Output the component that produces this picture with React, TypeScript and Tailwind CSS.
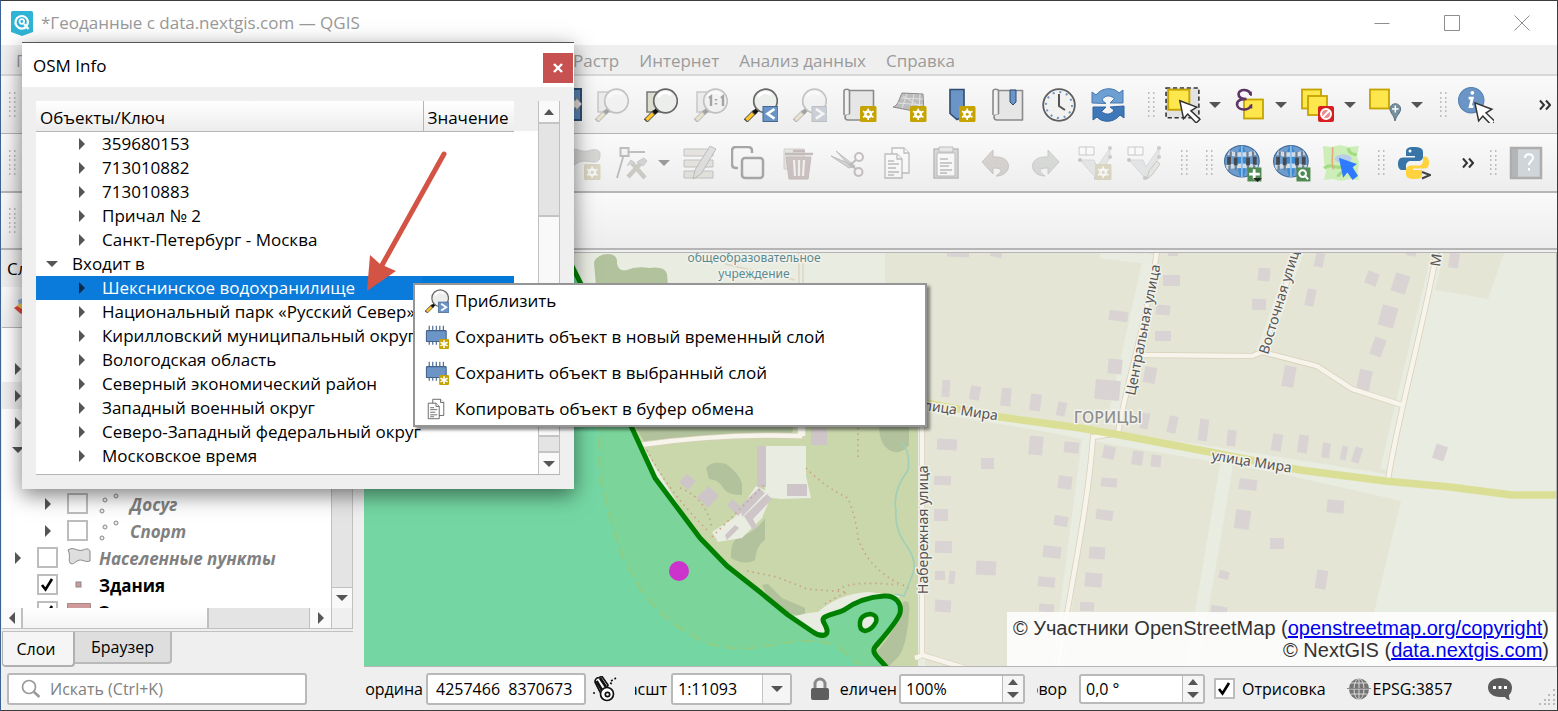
import React from 'react';
import type { ReactNode } from 'react';

const UI = "font-['Open_Sans','Noto_Sans',sans-serif]";

/* ---------- small shared pieces ---------- */

function Svg({ children, off, size = 34 }: { children: ReactNode; off?: boolean; size?: number }) {
  return (
    <svg
      width={size}
      height={size}
      viewBox="0 0 34 34"
      fill="none"
      aria-hidden="true"
      className={off ? 'opacity-35 saturate-[.35]' : ''}
    >
      {children}
    </svg>
  );
}

function Tri({ dir, color = '#555' }: { dir: 'up' | 'down' | 'left' | 'right'; color?: string }) {
  const d = { up: 'M1 9 6 3l5 6z', down: 'M0 3h12L6 9z', left: 'M9 0v12L3 6z', right: 'M3 0v12l6-6z' }[dir];
  return (
    <svg width="12" height="12" viewBox="0 0 12 12" aria-hidden="true">
      <path d={d} fill={color} />
    </svg>
  );
}

function Grip() {
  return (
    <svg width="8" height="26" viewBox="0 0 8 26" className="shrink-0" aria-hidden="true">
      {[1, 6].map((x) =>
        [1, 6, 10, 15, 19, 24].map((y) => <rect key={`${x}-${y}`} x={x} y={y - 1} width="1.500" height="2" fill="#bdbdbd" />),
      )}
    </svg>
  );
}

function Tool({ label, children, className = '' }: { label: string; children: ReactNode; className?: string }) {
  return (
    <button type="button" aria-label={label} className={`flex h-10 shrink-0 items-center justify-center ${className}`}>
      {children}
    </button>
  );
}

function Badge() {
  return (
    <g>
      <rect x="17" y="18" width="16.500" height="16" rx="1.500" fill="#c5a300" />
      <g stroke="#fff" strokeWidth="1.600">
        <path d="M25.200 20.500v11.500M20 23.200l10.500 6M30.500 23.200l-10.500 6" />
        <circle cx="25.200" cy="26.200" r="3.200" fill="#fff" />
      </g>
      <circle cx="25.200" cy="26.200" r="1.500" fill="#c5a300" />
    </g>
  );
}

function Lens({ children, page }: { children?: ReactNode; page?: boolean }) {
  return (
    <g>
      {page && <path d="M3 4h14v20H3z" fill="#dcdcd0" stroke="#777" strokeWidth="1.500" />}
      <path d="M1.500 33 11 23.500" stroke="#555" strokeWidth="5" />
      <path d="M2.500 32 9 25.500" stroke="#ffc629" strokeWidth="3.200" />
      <path d="M10 25 14.500 20.500" stroke="#111" strokeWidth="4" />
      <circle cx="21.500" cy="13" r="11.800" fill="#eceeec" stroke="#666" strokeWidth="1.700" />
      <path d="M14 9c3-5 9-6 13-2" stroke="#fff" strokeWidth="3" />
      {children}
    </g>
  );
}

function ArrowBox({ dir, x = 19 }: { dir: 'l' | 'r'; x?: number }) {
  return (
    <g>
      <rect x={x} y="18.500" width="15" height="15" fill="#6b95c7" stroke="#44678f" />
      <path d={dir === 'l' ? 'M30.500 21l-7 4.800 7 4.800' : 'M23 21l7 4.800-7 4.800'} stroke="#fff" strokeWidth="2.600" />
    </g>
  );
}

function Sheet() {
  return (
    <g fill="#e6e6e6" stroke="#8a8a8a" strokeWidth="1.600" strokeLinejoin="round">
      <path d="M6 2.500h24.500V32H5c-4 0-4-6 0-6h1z" />
      <path d="M1 27V3.500C1 .5 6.500.5 6.500 3.500V26" fill="#f2f2f2" />
    </g>
  );
}

function Pages() {
  return (
    <g stroke="#555" strokeWidth="1.300" fill="#fff">
      <path d="M12 2h12l5 5v20H12z" />
      <path d="M24 2v5h5" />
      <path d="M5 8h12l5 5v19H5z" />
      <path d="M17 8v5h5M8 15h6M8 18h11M8 22h8M8 26h11M8 29h6" />
    </g>
  );
}

function Cursor({ x, y }: { x: number; y: number }) {
  return (
    <path
      transform={`translate(${x} ${y})`}
      d="M0 0l3.500 17 4-4.500 8 8.500 3.500-3.500-8.500-8L16 6z"
      fill="#fff"
      stroke="#333"
      strokeWidth="1.400"
    />
  );
}

function Globe({ search }: { search?: boolean }) {
  return (
    <g>
      <ellipse cx="16" cy="15.500" rx="15.500" ry="14" fill="#6e9ccd" stroke="#40699a" />
      <ellipse cx="16" cy="15.500" rx="4" ry="14" fill="#3b8ad2" />
      <path d="M4 7.500c5 2.500 19 2.500 24 0M2 21c6-2 22-2 28 0" stroke="#cfdcea" strokeWidth="4" />
      <path d="M6 6.500v5M11 7v5M21 7v5M26 6.500v5M5 19v4M10.500 18.500v5M21.500 18.500v5M27 19v4" stroke="#6f7f90" strokeWidth="2" />
      <path d="M4.500 11.500v7M10.500 12v7M21.500 12v7M27.500 11.500v7" stroke="#454a50" strokeWidth="3.400" />
      <path d="M16 1.500v28" stroke="#8fbde6" strokeWidth="1.500" />
      <rect x="21" y="21" width="12.500" height="12.500" fill="#4f8a52" />
      {search ? (
        <g stroke="#fff" strokeWidth="1.800">
          <circle cx="26.500" cy="26.500" r="3" />
          <path d="M28.500 28.500l3 3" />
        </g>
      ) : (
        <g>
          <path d="M27 22.500v9M22.500 27H32" stroke="#fff" strokeWidth="2.500" />
          <path d="M26 30.500h8l-4 3.500z" fill="#222" />
        </g>
      )}
    </g>
  );
}

function Mesh({ children }: { children: ReactNode }) {
  return (
    <g>
      <path d="M2 14h14l3 7L32 2v9L20 32h-2z" fill="#c3ccd0" stroke="#9aa5a8" />
      <path d="M1 1h15v8H1zM8 1v8" stroke="#777" fill="#fff" />
      <g fill="#7a7ab0">
        <circle cx="32" cy="2" r="2" />
        <circle cx="32" cy="11" r="2" />
        <circle cx="18" cy="32" r="2" />
      </g>
      <circle cx="2" cy="14" r="2" fill="#c55" />
      {children}
    </g>
  );
}

const yellow = { fill: '#fde74c', stroke: '#c5a300', strokeWidth: 1.8 };

/* ---------- title, menu and tool bars ---------- */

function TitleBar() {
  return (
    <header className="flex h-11 shrink-0 items-center bg-white pl-[10px]">
      <svg width="22" height="25" viewBox="0 0 22 25" aria-hidden="true">
        <path d="M0 1.500Q0 0 1.500 0h19Q22 0 22 1.500V21l-11 4L0 21z" fill="#2fb4d6" />
        <path d="M15.500 15.500A6.300 6.300 0 1 1 17 10.500c0 1.500-.4 2.800-1.200 4" fill="none" stroke="#fff" strokeWidth="2.200" />
        <circle cx="10.800" cy="10.500" r="2.300" fill="none" stroke="#fff" strokeWidth="1.700" />
        <path d="M13 13l4.500 5" stroke="#fff" strokeWidth="2.400" />
      </svg>
      <h1 className="ml-2 whitespace-nowrap text-[17px] text-[#999]">*Геоданные с data.nextgis.com — QGIS</h1>
      <div className="ml-auto flex">
        {[
          ['Свернуть', 'M.5 8.500h15'],
          ['Развернуть', 'M.5 .5h15v15h-15z'],
          ['Закрыть', 'M.5.500l15 15M15.500.500l-15 15'],
        ].map(([label, d]) => (
          <button key={label} type="button" aria-label={label} className="flex h-11 w-[70px] items-center justify-center">
            <svg width="16" height="16" viewBox="0 0 16 16" fill="none" stroke="#8e8e8e" aria-hidden="true">
              <path d={d} />
            </svg>
          </button>
        ))}
      </div>
    </header>
  );
}

function MenuBar() {
  return (
    <nav className="flex h-[31px] shrink-0 items-center border-b-2 border-[#d8d8d8] bg-[#efefef] pt-[2px] pl-[5px] text-[17px] text-[#9b9b9b]">
      <button type="button" className="w-[557px] px-[10px] text-left">Проект</button>
      {['Растр', 'Интернет', 'Анализ данных', 'Справка'].map((m) => (
        <button key={m} type="button" className="whitespace-nowrap px-[10px]">
          {m}
        </button>
      ))}
    </nav>
  );
}

const BAR = 'flex shrink-0 items-center bg-linear-to-b from-[#fafafa] to-[#ededed] border-[#b5b5b5]';

function More({ className }: { className: string }) {
  return (
    <button type="button" aria-label="Ещё" className={`shrink-0 ${className}`}>
      <svg width="12" height="12" viewBox="0 0 12 12" fill="none" stroke="#333" strokeWidth="2" aria-hidden="true">
        <path d="M1 1.500 5 6l-4 4.500M7 1.500 11 6l-4 4.500" />
      </svg>
    </button>
  );
}

function NavigationBar() {
  return (
    <div className={`${BAR} h-[58px] border-b pl-[7px]`}>
      <Grip />
      <div className="flex w-[571px] shrink-0 justify-end pr-[3px]">
        <Svg>
          <path d="M14 1h17v31H14z" fill="#5b85b8" stroke="#2e4d73" strokeWidth="2" />
          <path d="M20 12h6v-3l6 7-6 7v-3h-6z" fill="#ddd" stroke="#777" />
        </Svg>
      </div>
      <div className="flex w-[546px] shrink-0">
        <Tool label="Увеличить до выделения" className="flex-1"><Svg off><Lens page /></Svg></Tool>
        <Tool label="Увеличить до слоя" className="flex-1"><Svg><Lens page /></Svg></Tool>
        <Tool label="Исходный масштаб" className="flex-1">
          <Svg off>
            <Lens page>
              <path d="M15 10l2-1.500V18M27 10l2-1.500V18M22 11v1.500M22 15v1.500" stroke="#111" strokeWidth="2.400" />
            </Lens>
          </Svg>
        </Tool>
        <Tool label="Предыдущий охват" className="flex-1"><Svg><Lens><ArrowBox dir="l" /></Lens></Svg></Tool>
        <Tool label="Следующий охват" className="flex-1"><Svg off><Lens><ArrowBox dir="r" /></Lens></Svg></Tool>
        <Tool label="Новый вид карты" className="flex-1"><Svg><Sheet /><Badge /></Svg></Tool>
        <Tool label="Новый 3D вид" className="flex-1">
          <Svg>
            <path d="M9 5l21 1 1 19L0 19c5-1 6-8 9-14z" fill="#bdbdbd" stroke="#8b8b8b" />
            <path d="M8 10l22 1M5 15l25 2M14 6l-5 14M21 6l-3 16M27 6l-1 17M10 8l18 11" stroke="#e2e2e2" />
            <Badge />
          </Svg>
        </Tool>
        <Tool label="Новая закладка" className="flex-1">
          <Svg>
            <path d="M8 1.500h14v27l-7 3-7-6z" fill="#6b95c7" stroke="#2e4d73" strokeWidth="1.600" />
            <Badge />
          </Svg>
        </Tool>
        <Tool label="Закладки" className="flex-1">
          <Svg>
            <Sheet />
            <path d="M18 2h6v12l-3 3-3-3z" fill="#6b95c7" stroke="#2e4d73" />
          </Svg>
        </Tool>
        <Tool label="Время" className="flex-1">
          <Svg>
            <circle cx="17" cy="17" r="15.800" fill="#f2f2f0" stroke="#5e5e5e" strokeWidth="1.800" />
            <circle cx="17" cy="17" r="13" stroke="#6b95c7" strokeWidth="2" strokeDasharray="2 4.800" />
            <path d="M17 6v12l6 4" stroke="#555" strokeWidth="2" />
          </Svg>
        </Tool>
        <Tool label="Обновить" className="flex-1">
          <Svg>
            <path d="M1 15V4l4 3C11-1 23-1 28 5l4-3v13H19l4.500-4.500C18 6 13 8 11 12l4 3.500z" fill="#6e9fd3" stroke="#4478b2" />
            <path d="M33 18v12l-4-3C23 35 11 35 6 29l-4 3V19h13l-4.500 4.500C16 28 21 26 23 22l-4-3z" fill="#3f78b8" stroke="#2f62a0" />
          </Svg>
        </Tool>
      </div>
      <div className="flex flex-1 items-center overflow-hidden pl-[14px]">
        <Grip />
        <Tool label="Выделить объекты" className="ml-[10px]">
          <Svg size={36}>
            <path d="M1 1h31v28H1z" fill="#e2e2e2" stroke="#333" strokeWidth="1.500" strokeDasharray="4 2.500" />
            <rect x="3" y="2.500" width="20" height="19" {...yellow} />
            <Cursor x={14} y={13} />
          </Svg>
        </Tool>
        <Tool label="Варианты выделения" className="ml-[8px] w-3"><Tri dir="down" /></Tool>
        <Tool label="Выделить по выражению" className="ml-[12px]">
          <Svg>
            <rect x="11" y="11.500" width="19" height="19" {...yellow} />
            <path
              d="M17.500 7C17 1 6 0 5.500 6c0 4 3.500 5 8 5C8 11 4 12.500 4 16.500 4.500 23 17 23 18 17"
              stroke="#5c3566"
              strokeWidth="2.600"
            />
            <path d="M18 3.500V8M18.500 16v4.500" stroke="#5c3566" strokeWidth="1.500" />
          </Svg>
        </Tool>
        <Tool label="Варианты выражения" className="ml-[8px] w-3"><Tri dir="down" /></Tool>
        <Tool label="Снять выделение" className="ml-[14px]">
          <Svg>
            <rect x="1" y="1.500" width="19" height="19" {...yellow} />
            <rect x="7" y="8" width="19" height="19" {...yellow} />
            <rect x="17" y="18" width="16" height="16" rx="2" fill="#d81e1e" />
            <circle cx="25" cy="26" r="5" stroke="#fff" strokeWidth="2" fill="#e88" />
            <path d="M21.500 29.500l7-7" stroke="#fff" strokeWidth="2" />
          </Svg>
        </Tool>
        <Tool label="Варианты снятия" className="ml-[9px] w-3"><Tri dir="down" /></Tool>
        <Tool label="Выделить по расположению" className="ml-[13px]">
          <Svg>
            <rect x="1" y="1.500" width="19" height="19" {...yellow} />
            <path d="M26 33c-1-6-5-8-5-12a5.300 5.300 0 0 1 10.600 0c0 4-4 6-5.600 12z" fill="#77909f" stroke="#587080" />
            <path d="M26.300 17.500v7M23 21h6.600" stroke="#fff" strokeWidth="1.500" />
          </Svg>
        </Tool>
        <Tool label="Варианты расположения" className="ml-[8px] w-3"><Tri dir="down" /></Tool>
        <div className="ml-[16px]"><Grip /></div>
        <Tool label="Определить объекты" className="ml-[11px]">
          <Svg size={36}>
            <circle cx="12.500" cy="12.500" r="12" fill="#6b95c7" stroke="#5580b2" />
            <path d="M13.500 5.500h.1" stroke="#fff" strokeWidth="3.500" strokeLinecap="round" />
            <path d="M10 10.500h3.500L11.500 18.500h3" stroke="#fff" strokeWidth="2.600" />
            <Cursor x={16} y={15} />
          </Svg>
        </Tool>
        <More className="mr-[6px] ml-auto" />
      </div>
    </div>
  );
}

function EditBar() {
  return (
    <div className={`${BAR} h-[59px] border-b-2 pl-[7px]`}>
      <Grip />
      <div className="flex w-[594px] shrink-0 justify-end pr-[9px]">
        <Svg off>
          <path d="M1 5c8-5 12 2 20 0 5-2 12-2 12 3 0 6-2 8-6 8-7 0-12-3-18 2-5 3-9-3-8-13z" fill="#9a9f8c" stroke="#777" />
          <Badge />
        </Svg>
      </div>
      <Tool label="Инструменты узлов" className="ml-[5px]">
        <Svg off>
          <path d="M2 32 9 8M13 6h17" stroke="#555" strokeWidth="1.800" />
          <rect x="5.500" y="2" width="8" height="8" stroke="#555" strokeWidth="2" fill="#eee" />
          <path d="M13 31l12-13M17 17l13 15" stroke="#8b8250" strokeWidth="4.500" />
          <path d="M22 16l7-4 3 3-4 5zM12 20l4-6 4 3" fill="#999" stroke="#777" />
        </Svg>
      </Tool>
      <Tool label="Варианты инструмента" className="ml-[9px] w-3"><Tri dir="down" color="#999" /></Tool>
      <div className="ml-[4px] flex w-[495px] shrink-0">
        <Tool label="Режим редактирования" className="flex-1">
          <Svg off>
            <path d="M2 3h29v7H2zM2 14h29v7H2zM2 25h29v7H2z" fill="#c8c29c" stroke="#666" />
            <path d="M11 33l2-9L28 0l6 3-15 25z" fill="#bbb5ad" stroke="#555" />
          </Svg>
        </Tool>
        <Tool label="Дублировать" className="flex-1">
          <Svg>
            <path d="M7 22H5q-4 0-4-4V5q0-4 4-4h12q4 0 4 4v2" stroke="#a6a6a6" strokeWidth="2.500" />
            <rect x="11" y="12" width="21" height="20" rx="3" stroke="#a6a6a6" strokeWidth="2.500" />
          </Svg>
        </Tool>
        <Tool label="Удалить" className="flex-1">
          <Svg off>
            <path d="M3 3h20v20H3z" fill="#cdc7a6" stroke="#888" />
            <path d="M5 11h25l-3 22H8z" fill="#b05a5a" stroke="#8c4a4a" />
            <path d="M13 14l1 16M18 14v16M23 14l-1 16" stroke="#f2e4e4" strokeWidth="2.200" />
            <path d="M4 8h28M12 5h12" stroke="#8c4a4a" strokeWidth="2.500" />
          </Svg>
        </Tool>
        <Tool label="Вырезать" className="flex-1">
          <Svg off>
            <path d="M1 10l24 10-6 2zM6 5l19 15-5 0z" fill="#999" stroke="#555" />
            <path d="M20 19l6-5M20 19l6 4" stroke="#555" strokeWidth="2" />
            <circle cx="29" cy="11" r="4" stroke="#8a5555" strokeWidth="2" />
            <circle cx="28.500" cy="26" r="4" stroke="#8a5555" strokeWidth="2" />
          </Svg>
        </Tool>
        <Tool label="Копировать" className="flex-1"><Svg off><Pages /></Svg></Tool>
        <Tool label="Вставить" className="flex-1">
          <Svg off>
            <path d="M5 3h24v29H5z" fill="#9aa39a" stroke="#555" strokeWidth="1.500" />
            <path d="M8 7h18v23H8z" fill="#fff" stroke="#555" />
            <path d="M10 1h14v5H10z" fill="#ccc" stroke="#555" />
            <path d="M11 13h8M11 17h12M11 20h9M11 24h12M11 27h7" stroke="#555" strokeWidth="1.300" />
          </Svg>
        </Tool>
        <Tool label="Отменить" className="flex-1">
          <Svg off>
            <path d="M3 16 14 4v7c12-1 17 5 15 12-2 5-7 7-12 7 6-4 8-8-3-8v6z" fill="#a88f7e" stroke="#806a5b" />
          </Svg>
        </Tool>
        <Tool label="Повторить" className="flex-1">
          <Svg off>
            <path d="M31 16 20 4v7C8 10 3 16 5 23c2 5 7 7 12 7-6-4-8-8 3-8v6z" fill="#9bab97" stroke="#71806e" />
          </Svg>
        </Tool>
        <Tool label="Создать сетку" className="flex-1"><Svg off><Mesh><Badge /></Mesh></Svg></Tool>
        <Tool label="Править сетку" className="flex-1">
          <Svg off><Mesh><path d="M20 33l2-8 8-10 3 3-8 11z" fill="#d8d0a0" stroke="#777" /></Mesh></Svg>
        </Tool>
      </div>
      <div className="flex flex-1 items-center overflow-hidden pl-[11px]">
        <Grip />
        <div className="ml-[17px]"><Grip /></div>
        <div className="ml-[5px] flex w-[147px] shrink-0">
          <Tool label="Добавить веб-слой" className="flex-1"><Svg size={38}><Globe /></Svg></Tool>
          <Tool label="Поиск веб-слоёв" className="flex-1"><Svg size={38}><Globe search /></Svg></Tool>
          <Tool label="OSM Info" className="flex-1">
            <Svg size={36}>
              <path d="M0 1l8 1 8-2 8 2 10-1-2 9 2 7-1 8 1 8-9-1-8 2-8-2-8 1 2-9-2-7z" fill="#cdeeb8" />
              <path d="M1 22c8-6 10 2 18-2M14 30c2-6 9-4 12-10M24 3c0 5 5 6 8 6" stroke="#a2dc82" strokeWidth="3" />
              <path d="M9 2c1 9-2 13 1 21" stroke="#e8a878" strokeWidth="1.500" />
              <ellipse cx="19" cy="13" rx="8" ry="4" fill="#b7cdea" />
              <path d="M15 12l17 6-4 3 5 8-5 4-5-7-4 5z" fill="#2f7bff" />
            </Svg>
          </Tool>
        </div>
        <div className="ml-[12px]"><Grip /></div>
        <Tool label="Консоль Python" className="ml-[12px]">
          <Svg>
            <path d="M17 1c-7 0-8 2-8 5v4h9v1.500H6C2 11.500 1 15 1 18c0 4 2 6 4 6h4v-4c0-3 2-5 5-5h8c2 0 4-2 4-4V6c0-4-4-5-9-5z" fill="#3775a9" />
            <path d="M17 33c7 0 8-2 8-5v-4h-9v-1.500h12c3 0 4-3 4-6 0-4-2-6-4-6h-2v4c0 3-2 5-4 5h-8c-3 0-5 2-5 4v5c0 3 3 4.500 8 4.500z" fill="#ffd340" />
            <circle cx="13" cy="5" r="1.500" fill="#fff" />
            <path d="M25 26l8 3-8 3.500" stroke="#444" strokeWidth="2" />
          </Svg>
        </Tool>
        <More className="ml-[31px]" />
        <div className="ml-[15px]"><Grip /></div>
        <Tool label="Справка" className="ml-[12px]">
          <Svg>
            <path d="M2 2h30v30H2z" fill="#cfd5d8" stroke="#adadad" strokeWidth="2.500" />
            <path d="M3 3h6v28H3z" fill="#b3b6b8" />
            <path d="M16 12c0-5 8-5 8 0 0 3-4 3-4 7M20 22v2.500" stroke="#fff" strokeWidth="2" />
          </Svg>
        </Tool>
      </div>
    </div>
  );
}

/* ---------- layers dock ---------- */

type Layer = {
  name?: string;
  open?: boolean;
  leaf?: boolean;
  child?: boolean;
  checked?: boolean;
  current?: boolean;
  symbol?: 'points' | 'area' | 'dot' | 'fill';
};

const layers: Layer[] = [
  { leaf: true },
  {},
  { current: true },
  {},
  { open: true },
  { child: true, leaf: true },
  { name: 'Досуг', child: true, symbol: 'points', checked: false },
  { name: 'Спорт', child: true, symbol: 'points', checked: false },
  { name: 'Населенные пункты', symbol: 'area', checked: false },
  { name: 'Здания', leaf: true, symbol: 'dot', checked: true },
  { name: 'Земли', leaf: true, symbol: 'fill', checked: true },
];

const symbols = {
  points: (
    <g fill="#eee" stroke="#888">
      <circle cx="4" cy="18" r="2" />
      <circle cx="7" cy="7" r="2" />
      <circle cx="18" cy="3" r="2" />
    </g>
  ),
  area: <path d="M1 3c6-4 9 2 15 0 4-2 7-1 7 2v9c-5 2-8-3-13 0-3 2-4 4-7 2-2-4 1-7-2-13z" fill="#dedede" stroke="#888" />,
  dot: <rect x="9" y="8" width="5" height="5" fill="#cf9a9a" stroke="#888" />,
  fill: <path d="M.5 2.500h23v20H.5z" fill="#cf9a9a" stroke="#a88" />,
};

function Check({ on, label, id }: { on?: boolean; label?: string; id?: string }) {
  return (
    <span className="relative flex size-[21px] shrink-0">
      <input
        id={id}
        type="checkbox"
        defaultChecked={on}
        aria-label={label}
        className="peer size-[21px] appearance-none border-2 border-[#bdbdbd] bg-white"
      />
      <svg viewBox="0 0 21 21" className="pointer-events-none absolute inset-0 hidden peer-checked:block" aria-hidden="true">
        <path d="M5 11l3.500 4.500L15 5" fill="none" stroke="#000" strokeWidth="2.600" />
      </svg>
    </span>
  );
}

function Dock() {
  return (
    <aside className="flex w-[352px] shrink-0 flex-col pl-px">
      <h2 className="flex h-[37px] shrink-0 items-center pl-[5px] text-[17px]">Слои</h2>
      <div className="flex h-[41px] shrink-0 items-center border-b border-[#b5b5b5] bg-linear-to-b from-[#fafafa] to-[#ededed] pl-3">
        <svg width="22" height="22" viewBox="0 0 22 22" aria-hidden="true">
          <path d="M4 4l8-3 2 8-9 2z" fill="#8fb0d8" />
          <path d="M3 9l6-2 3 6-7 2z" fill="#f0c850" />
          <path d="M0 12l3-2 8 5-4 3z" fill="#e2483c" />
        </svg>
      </div>
      <div className="flex min-h-0 flex-1">
        <ul className="min-w-0 flex-1 overflow-hidden bg-white">
          {layers.map((l, i) => (
            <li key={i} className={`flex h-[27px] items-center ${l.child ? 'pl-[40px]' : 'pl-[10px]'} ${l.current ? 'bg-[#efefef]' : ''}`}>
              {l.leaf ? (
                <span className="w-[25px] shrink-0" />
              ) : (
                <button type="button" aria-label="Развернуть" className="w-[25px] shrink-0">
                  <Tri dir={l.open ? 'down' : 'right'} />
                </button>
              )}
              {l.name && (
                <>
                  <Check on={l.checked} label={l.name} />
                  <svg width="24" height="22" viewBox="0 0 24 22" className={`shrink-0 ${l.child ? 'ml-[10px]' : 'ml-[9px]'}`} aria-hidden="true">
                    {l.symbol && symbols[l.symbol]}
                  </svg>
                  <span className={`ml-[8px] pt-[2px] whitespace-nowrap text-[17px] font-bold ${l.checked ? 'text-black' : 'text-[#808080] italic'}`}>
                    {l.name}
                  </span>
                </>
              )}
            </li>
          ))}
        </ul>
        <div className="flex w-[22px] shrink-0 flex-col justify-end border-x border-[#c0c0c0] bg-[#e4e4e4]">
          <button type="button" aria-label="Вниз" className="flex h-[21px] items-center justify-center border-t border-[#c0c0c0] bg-[#f8f8f8]">
            <Tri dir="down" />
          </button>
        </div>
      </div>
      <div className="flex h-[21px] shrink-0 border-b border-[#c0c0c0]">
        <button type="button" aria-label="Влево" className="flex w-[21px] items-center justify-center border-r-2 border-[#c0c0c0] bg-[#fafafa]">
          <Tri dir="left" />
        </button>
        <div className="w-[186px] border-r-2 border-[#c0c0c0] bg-linear-to-b from-white to-[#f3f3f3]" />
        <div className="flex-1 border-r border-[#c0c0c0] bg-[#e4e4e4]" />
        <button type="button" aria-label="Вправо" className="flex w-[21px] items-center justify-center bg-[#fafafa]">
          <Tri dir="right" />
        </button>
        <div className="w-[22px] border-x border-[#c0c0c0]" />
      </div>
      <div role="tablist" className="mt-[2px] flex h-[36px] shrink-0 items-start border-t border-[#c0c0c0] text-[16px]">
        <button role="tab" aria-selected="true" type="button" className="h-[35px] w-[73px] rounded-b-sm border-r-2 border-b-2 border-l border-[#b0b0b0] bg-[#f5f5f5] pr-1">
          Слои
        </button>
        <button role="tab" aria-selected="false" type="button" className="h-[32px] w-[97px] rounded-br-sm border-r-2 border-b-2 border-[#b9b9b9] bg-[#dedede]">
          Браузер
        </button>
      </div>
    </aside>
  );
}

/* ---------- map ---------- */

const shore =
  'M570 262 581 284C596 330 610 385 632 428L655 478 700 538 727 566 760 592 788 615 813 632C820 637 828 637 827 630 826 624 820 620 825 617 830 614 838 613 844 610 855 602 868 597 884 596 896 595 902 604 900 613 898 621 880 641 875 647 871 653 878 657 887 668';

/* x, y, width, height, rotation */
const houses: number[][] = [
  [947, 252, 22, 5, 2], [990, 252, 12, 5, 12], [1168, 252, 10, 4, 0], [1163, 275, 17, 11, 0], [1156, 305, 14, 10, 4], [1155, 331, 16, 10, 0],
  [1109, 311, 19, 10, 8], [1108, 359, 14, 15, 5], [1095, 380, 25, 20, 5], [1144, 367, 12, 16, 10], [942, 380, 8, 17, 4], [970, 386, 10, 14, 10],
  [1001, 388, 10, 18, 5], [1030, 394, 11, 17, 7], [1057, 402, 9, 14, 12], [1141, 413, 8, 16, 10], [1168, 416, 9, 17, 12], [1199, 419, 9, 22, 7],
  [1227, 430, 9, 16, 6], [937, 439, 20, 11, 3], [1029, 436, 14, 19, 5], [1064, 442, 15, 11, 5], [1103, 446, 12, 13, 12], [1132, 451, 11, 14, 8],
  [1151, 455, 10, 12, 5], [981, 458, 13, 11, 0], [934, 476, 17, 9, 2], [1058, 476, 14, 13, 7], [1101, 478, 16, 9, 4], [934, 509, 14, 12, 0],
  [1054, 516, 14, 10, 10], [1096, 510, 17, 10, 8], [935, 541, 17, 12, 2], [1043, 546, 18, 12, 7], [1089, 547, 16, 12, 4], [976, 561, 20, 14, 3],
  [935, 571, 10, 9, 0], [949, 571, 6, 13, 5], [1038, 577, 17, 10, 5], [1085, 573, 17, 14, 5], [935, 600, 16, 12, 3], [1039, 604, 15, 8, 3],
  [1080, 602, 14, 9, 3], [1258, 268, 12, 13, 5], [1252, 299, 14, 11, 2], [1315, 253, 9, 14, 12], [1306, 289, 9, 17, 12], [1366, 272, 12, 13, 20],
  [1393, 274, 15, 19, 18], [1380, 306, 16, 21, 15], [1372, 338, 12, 18, 20], [1358, 370, 13, 20, 12], [1283, 366, 12, 21, 10], [1449, 253, 10, 15, 8],
  [1406, 252, 10, 4, 10], [1434, 445, 12, 15, 18], [1272, 434, 10, 17, 9], [1298, 435, 10, 18, 8], [1322, 443, 8, 15, 8], [1341, 446, 6, 14, 12],
  [1353, 447, 8, 16, 18], [1239, 479, 18, 11, 7], [1235, 510, 15, 19, 8], [1327, 500, 17, 13, 5], [1270, 538, 14, 11, 0], [1219, 571, 10, 8, 15],
  [1316, 570, 11, 19, 9], [1211, 606, 16, 8, 10],
];

const roads = [
  'M922 420V655L965 668M921 656l-6 2',
  'M1157 250C1150 310 1122 400 1118 434M1119 433l-26 4C1088 510 1068 600 1058 668',
  'M1140 355l112 1 10-4 55 14 35 23 50 16',
  'M1262 353l36-102',
  'M1437 250C1425 320 1397 420 1388 480',
  'M640 445C690 438 740 434 800 436V425M803 436V420',
];

function Map() {
  return (
    <svg
      viewBox="364 253 1192 413"
      preserveAspectRatio="xMinYMin slice"
      className="absolute inset-0 size-full"
      role="img"
      aria-label="Карта посёлка Горицы"
      fill="none"
    >
      <path fill="#e8ece1" d="M364 253h1400v700H364z" />
      <path fill="#e4e5d5" d="M885 253H1437L1387 474 1210 446 1060 424 930 402H885zM1437 253h67l-16 46-53-9zM925 412 1085 438 1225 461 1401 501 1360 670H925z" />
      <g stroke="#e8ece1">
        <path d="M1150 254 1112 425" strokeWidth="12" />
        <path d="M1100 254l54 6M930 404l160 32 300 52" strokeWidth="9" />
        <path d="M1227 462 1192 668" strokeWidth="13" />
        <path d="M1262 353l36-102M1386 470l50-210" strokeWidth="12" />
        <path d="M1088 440l-30 228" strokeWidth="12" />
      </g>
      <path fill="#c9d7ab" d="M630 425H918V668H800L700 540z" />
      <path fill="#b1c29c" d="M594 262q4-8 14-8 10 0 9 10 2 8 10 6 9-4 22-2 16-2 18 6l1 12H596zM634 425h160l-2 8q-80 2-148 8z" />
      <g fill="#b1c29c">
        <path d="M706 468q6-8 20-4 14 10 16 20v11q-14 0-18-6-6-10-15-10zM879 425h30v20q-8 10-18 6-12-6-12-26zM731 554q0-18 16-20 12-6 18-16v22q-8 4-10 20-10 6-24-2zM762 585l6-1 14 14 23 10v8l-24-3q-12-12-19-28zM903 602q8-4 6 12-2 30-10 42l-12 12-11-16q20-20 27-50z" />
      </g>
      <path fill="#e8ece1" d="M766 446h40v30l5 22-30 1-16-2zM788 618q20-6 30-6 20-18 50-20l34 4-50 12-20 14-4 14-14-6zM712 532l22-14 22-32 16 8-10 24-20 20-24 4z" />
      <g fill="#cdc5c7">
        <path d="M757 446h9v41h-9zM787 484h20v12h-20zM811 428h16v17h-16zM679 482l8-8 9 7-8 9zM697 497l12-11 10 10-11 12zM727 505l6-6 11 11-6 6zM741 505l18-17 6 5-23 24zM744 516l23-22 5 5-19 20 4 8-4 3zM725 535l10-10 4 3-12 12z" />
      </g>
      <g stroke="#c9a183" strokeWidth="1.600" strokeDasharray="1.500 4">
        <path d="M647 450q20 40 60 80M680 488q26 10 32 40M806 468q20 20 42 30 8 20 10 40 10 30 42 46 10 4 12 6M747 571l30 6 30 12 40 3q-20 10-25 14M838 590q12-10 60-5M858 428v30M712 537l52-52" />
      </g>
      <path d="M901 442q10 10 7 28-16 22-12 40-2 20 12 38 10 15 4 28l-8 20-9-2" stroke="#9fcfb9" strokeWidth="1.600" />
      <g fill="#d9d4d3">
        {houses.map(([x, y, w, h, r], i) => (
          <rect key={i} x={x} y={y} width={w} height={h} transform={`rotate(${r} ${x + w / 2} ${y + h / 2})`} />
        ))}
      </g>
      {roads.map((d) => (
        <path key={d} d={d} stroke="#d9cfb8" strokeWidth="6" />
      ))}
      {roads.map((d) => (
        <path key={d} d={d} stroke="#f7f4ec" strokeWidth="4.500" />
      ))}
      <path d="M725 264l70 16M803 253v32M799 253v32" stroke="#ddd6c4" strokeWidth="1.500" />
      <path d="M900 398 1000 417 1080 428 1120 435 1210 452 1300 470 1385 481 1450 487 1512 495H1700" stroke="#dbdf96" strokeWidth="7.500" />

      <path fill="#74d7a3" d={`${shore}V900H364V253h200z`} />
      <path
        fill="#7bd499"
        d="M599 380V440Q599 480 604 495L619 550 642 592 660 613 678 627 700 640Q715 648 745 649L775 645Q810 637 835 645L865 668H887L873 652 900 613 885 596 844 610 825 618 827 632 813 632 760 592 700 538 655 478 632 428z"
      />
      <path
        d="M599 380V440Q599 480 604 495L619 550 642 592 660 613 678 627 700 640Q715 648 745 649L775 645Q810 637 835 645L860 665"
        stroke="#8dcd84"
        strokeWidth="2.200"
        strokeDasharray="12 7"
      />
      <path d={shore} stroke="#008000" strokeWidth="5" strokeLinejoin="round" />
      <path d="M860 622q1-7 10-8 8 1 6 8-4 8-11 9-6-1-5-9z" fill="#e8ece1" stroke="#008000" strokeWidth="4.500" />
      <circle cx="679" cy="571" r="10" fill="#cc33cc" />

      <g
        className="font-['Noto_Sans',sans-serif]"
        fontSize="14"
        fill="#555"
        stroke="#f3f2ea"
        strokeWidth="3"
        paintOrder="stroke"
        strokeLinejoin="round"
      >
        <g fill="#5a8a90" fontSize="12" textAnchor="middle">
          <text x="754" y="262">общеобразовательное</text>
          <text x="754" y="278">учреждение</text>
        </g>
        <text transform="translate(917 409) rotate(8)">улица Мира</text>
        <text transform="translate(1211 460) rotate(9)">улица Мира</text>
        <text transform="translate(1135 396) rotate(-79)">Центральная улица</text>
        <text transform="translate(1268 355) rotate(-73)">Восточная улица</text>
        <text transform="translate(1440 267) rotate(-82)">Московская</text>
        <text transform="translate(928 594) rotate(-90)">Набережная улица</text>
        <text x="1108" y="423" textAnchor="middle" fontSize="16" fill="#8f8f8f" fontWeight="500">ГОРИЦЫ</text>
      </g>
    </svg>
  );
}

function MapView() {
  return (
    <main className="relative mt-[2px] ml-[11px] min-w-0 flex-1 overflow-hidden border-y border-r border-[#b5b5b5]">
      <Map />
      <div className="absolute right-0 bottom-0 bg-white/85 py-[5px] pr-[7px] pl-[6px] text-right font-['Liberation_Sans',Arial,sans-serif] text-[20px] leading-[22px] text-[#333]">
        <p>
          © Участники OpenStreetMap (<a href="#osm" className="text-[#0000ee] underline">openstreetmap.org/copyright</a>)
        </p>
        <p>
          © NextGIS (<a href="#nextgis" className="text-[#0000ee] underline">data.nextgis.com</a>)
        </p>
      </div>
    </main>
  );
}

/* ---------- status bar ---------- */

const FIELD = 'rounded-[3px] border-2 border-[#b9b9b9] bg-white';

function Spin({ id, value }: { id: string; value: string }) {
  return (
    <div className={`flex h-[30px] w-[126px] shrink-0 ${FIELD}`}>
      <input id={id} defaultValue={value} className="w-[101px] min-w-0 pl-[5px] outline-none" />
      <div className="flex flex-1 flex-col items-center border-l border-[#b9b9b9] bg-[#f5f5f5]">
        <button type="button" aria-label="Больше" className="flex h-[13px] items-center"><Tri dir="up" /></button>
        <button type="button" aria-label="Меньше" className="flex h-[13px] items-center"><Tri dir="down" /></button>
      </div>
    </div>
  );
}

function Cut({ htmlFor, children, className }: { htmlFor: string; children: string; className: string }) {
  return (
    <label htmlFor={htmlFor} className={`flex shrink-0 justify-end overflow-hidden whitespace-nowrap ${className}`}>
      {children}
    </label>
  );
}

function StatusBar() {
  return (
    <footer className="flex h-[43px] shrink-0 items-center pl-[6px] text-[16px]">
      <label className={`flex h-8 w-[300px] shrink-0 items-center pl-3 ${FIELD}`}>
        <svg width="20" height="20" viewBox="0 0 20 20" fill="none" stroke="#999" strokeWidth="1.700" aria-hidden="true">
          <circle cx="8" cy="8" r="6.500" />
          <path d="M13 13l5.500 5" strokeWidth="2.500" />
        </svg>
        <input aria-label="Искать" placeholder="Искать (Ctrl+K)" className="ml-[9px] min-w-0 flex-1 outline-none placeholder:text-[#808080]" />
      </label>
      <Cut htmlFor="coord" className="ml-[56px] w-[60px]">ордина</Cut>
      <input id="coord" defaultValue="4257466  8370673" className={`ml-[3px] h-8 w-[160px] shrink-0 px-2 ${FIELD}`} />
      <button type="button" aria-label="Экстент" className="ml-[7px]">
        <svg width="24" height="26" viewBox="0 0 24 26" fill="none" stroke="#111" strokeWidth="1.700" aria-hidden="true">
          <path d="M2 6Q2 2 6 1.500l3-1L15 9l-3 8-5-1z" fill="#fff" />
          <path d="M3.500 5l6 10M7 2l6 9" strokeWidth="2.800" />
          <circle cx="14" cy="18" r="6.500" fill="#fff" />
          <circle cx="14.500" cy="18.500" r="2.200" />
          <path d="M0 17h2M17 7l3 1M18 5l5-3" strokeDasharray="2 2" />
        </svg>
      </button>
      <Cut htmlFor="scale" className="ml-[18px] w-[32px]">асшт</Cut>
      <div className={`relative ml-[4px] flex h-8 w-[121px] shrink-0 ${FIELD}`}>
        <select id="scale" className="w-full appearance-none pl-[5px] outline-none">
          <option>1:11093</option>
        </select>
        <span className="pointer-events-none absolute inset-y-0 right-0 flex w-[28px] items-center justify-center border-l border-[#c4c4c4] bg-[#f5f5f5]">
          <Tri dir="down" />
        </span>
      </div>
      <button type="button" aria-label="Закрепить масштаб" className="ml-[18px]">
        <svg width="20" height="24" viewBox="0 0 20 24" aria-hidden="true">
          <path d="M5 12V7a5 5 0 0 1 10 0v5" fill="none" stroke="#888" strokeWidth="3" />
          <rect x="1" y="11" width="18" height="12" rx="2" fill="#5e5e5e" />
        </svg>
      </button>
      <Cut htmlFor="zoom" className="ml-[7px] w-[60px]">еличен</Cut>
      <div className="ml-[2px]"><Spin id="zoom" value="100%" /></div>
      <Cut htmlFor="rot" className="ml-[12px] w-[30px]">овор</Cut>
      <div className="ml-[12px]"><Spin id="rot" value="0,0 °" /></div>
      <label className="ml-[9px] flex shrink-0 items-center gap-[7px]">
        <Check on />
        Отрисовка
      </label>
      <button type="button" className="ml-[21px] flex shrink-0 items-center gap-[2px] whitespace-nowrap">
        <svg width="24" height="22" viewBox="0 0 24 22" fill="none" aria-hidden="true">
          <ellipse cx="12" cy="11" rx="10" ry="10.500" fill="#747474" />
          <path d="M12 0v22M4 5h16M4 16h16M2 11h20" stroke="#d8d8d8" />
          <ellipse cx="12" cy="11" rx="5" ry="10.500" stroke="#d8d8d8" />
          <path d="M0 10.500h24" stroke="#888" />
        </svg>
        EPSG:3857
      </button>
      <div className="ml-auto flex items-center gap-[26px] self-stretch">
        <button type="button" aria-label="Сообщения">
          <svg width="26" height="24" viewBox="0 0 26 24" aria-hidden="true">
            <path d="M13 1C6 1 1 5 1 10.500S6 20 13 20c2 0 4 0 5 0 1 2 3 3 5 3-1-2-1-4-1-5 2-2 3-4 3-7.500C25 5 20 1 13 1z" fill="#5b5b5b" />
            <path d="M6 9h3v3H6zM11.500 9h3v3h-3zM17 9h3v3h-3z" fill="#fff" />
          </svg>
        </button>
        <svg width="18" height="18" viewBox="0 0 18 18" fill="#bbb" className="mb-[3px] self-end" aria-hidden="true">
          <path d="M14 0h2v2h-2zM14 5h2v2h-2zM9 5h2v2H9zM14 10h2v2h-2zM9 10h2v2H9zM5 10h2v2H5zM14 14h2v2h-2zM9 14h2v2H9zM5 14h2v2H5zM0 14h2v2H0z" />
        </svg>
      </div>
    </footer>
  );
}

/* ---------- OSM Info window and its context menu ---------- */

const found: { name: string; group?: boolean; selected?: boolean }[] = [
  { name: '359680153' },
  { name: '713010882' },
  { name: '713010883' },
  { name: 'Причал № 2' },
  { name: 'Санкт-Петербург - Москва' },
  { name: 'Входит в', group: true },
  { name: 'Шекснинское водохранилище', selected: true },
  { name: 'Национальный парк «Русский Север»' },
  { name: 'Кирилловский муниципальный округ' },
  { name: 'Вологодская область' },
  { name: 'Северный экономический район' },
  { name: 'Западный военный округ' },
  { name: 'Северо-Западный федеральный округ' },
  { name: 'Московское время' },
];

const HEAD = 'border-b border-[#b5b5b5] bg-linear-to-b from-white to-[#ececec] p-0 pt-[3px] pl-1 font-normal';

function OsmInfo() {
  return (
    <section
      aria-label="OSM Info"
      className="absolute top-[41px] left-[21px] flex w-[552px] flex-col border-t border-[#555] bg-[#efefef] shadow-[0_6px_20px_rgba(0,0,0,0.5)]"
    >
      <div className="flex h-[44px] items-start bg-white pl-[11px]">
        <h2 className="pt-[11px] text-[17px] leading-6">OSM Info</h2>
        <button type="button" aria-label="Закрыть" className="mt-[10px] mr-px ml-auto flex h-[30px] w-[30px] items-center justify-center bg-[#c75050]">
          <svg width="10" height="10" viewBox="0 0 10 10" stroke="#fff" strokeWidth="2.400" aria-hidden="true">
            <path d="M1 1l8 8M9 1 1 9" />
          </svg>
        </button>
      </div>
      <div className="mx-[14px] mt-[14px] mb-[14px] flex h-[374px] border-b border-[#b5b5b5] text-[17px]">
        <div className="min-w-0 flex-1 bg-white">
          <table className="w-full table-fixed border-collapse">
            <colgroup>
              <col className="w-[387px]" />
              <col className="w-[91px]" />
              <col />
            </colgroup>
            <thead>
              <tr className="h-[30px] text-left">
                <th className={`border-r ${HEAD}`}>Объекты/Ключ</th>
                <th className={HEAD}>Значение</th>
                <td className="bg-[#efefef]" />
              </tr>
            </thead>
            <tbody>
              {found.map((f) => (
                <tr key={f.name} className={`h-6 ${f.selected ? 'text-white' : ''}`}>
                  <td className={`p-0 ${f.selected ? 'bg-[#0a7bda]' : ''}`}>
                    <div className={`flex h-6 items-center gap-[14px] whitespace-nowrap ${f.group ? 'pl-[10px]' : 'pl-[40px]'}`}>
                      <button type="button" aria-label="Развернуть" className="flex">
                        <Tri dir={f.group ? 'down' : 'right'} color={f.selected ? '#0a2a4a' : '#555'} />
                      </button>
                      {f.name}
                    </div>
                  </td>
                  <td className={`p-0 ${f.selected ? 'bg-[#0078d7]' : ''}`} />
                  <td className="p-0" />
                </tr>
              ))}
            </tbody>
          </table>
        </div>
        <div className="flex w-[22px] shrink-0 flex-col border-x border-[#c0c0c0] bg-[#f9f9f9]">
          <button type="button" aria-label="Вверх" className="flex h-[21px] items-center justify-center"><Tri dir="up" /></button>
          <div className="h-[95px] border-y-2 border-[#c4c4c4] bg-[#e4e4e4]" />
          <div className="flex-1" />
          <div className="h-[18px] border-y-2 border-[#c4c4c4] bg-[#e4e4e4]" />
          <button type="button" aria-label="Вниз" className="flex h-[21px] items-center justify-center"><Tri dir="down" /></button>
        </div>
      </div>
    </section>
  );
}

function Chip() {
  return (
    <Svg size={24}>
      <path d="M6 1v8M11 1v8M16 1v8M21 1v8M26 1v8M6 23v5M11 23v5M16 23v5" stroke="#44628a" strokeWidth="1.600" />
      <rect x="2" y="8" width="28" height="15.500" rx="1" fill="#6b95c7" stroke="#44628a" strokeWidth="1.500" />
      <rect x="20" y="20" width="14" height="14" rx="1.500" fill="#c5a300" />
      <path d="M27 21.500v11M22 24.500l10 5M32 24.500l-10 5" stroke="#fff" strokeWidth="2.200" />
    </Svg>
  );
}

function ContextMenu() {
  const items: [string, ReactNode][] = [
    ['Приблизить', <Svg size={24}><Lens><ArrowBox dir="r" /></Lens></Svg>],
    ['Сохранить объект в новый временный слой', <Chip />],
    ['Сохранить объект в выбранный слой', <Chip />],
    ['Копировать объект в буфер обмена', <Svg size={22}><Pages /></Svg>],
  ];
  return (
    <div
      role="menu"
      className="absolute top-[282px] left-[412px] flex w-[514px] flex-col bg-white shadow-[3px_3px_3px_rgba(0,0,0,0.45)] outline-2 -outline-offset-2 outline-[#959595]"
    >
      {items.map(([label, icon]) => (
        <button key={label} role="menuitem" type="button" className="flex h-9 items-center pl-[12px] text-[17px] whitespace-nowrap">
          <span className="flex w-[30px]">{icon}</span>
          {label}
        </button>
      ))}
    </div>
  );
}

function PointerArrow() {
  return (
    <svg width="90" height="150" viewBox="0 0 90 150" className="pointer-events-none absolute top-[147px] left-[361px]" aria-hidden="true">
      <path d="M82 6 19 119" stroke="#d35445" strokeWidth="5" strokeLinecap="round" />
      <path d="M5 143 8 107l10 9 16 7z" fill="#d35445" />
    </svg>
  );
}

export default function App() {
  return (
    <div className={`relative flex h-screen min-h-[640px] flex-col overflow-hidden border border-[#3c3c3c] border-l-[#3d6396] bg-[#efefef] text-black ${UI}`}>
      <TitleBar />
      <MenuBar />
      <NavigationBar />
      <EditBar />
      <div className={`${BAR} h-[57px] border-b-2 pl-[7px]`}>
        <Grip />
      </div>
      <div className="flex min-h-0 flex-1">
        <Dock />
        <MapView />
      </div>
      <StatusBar />
      <OsmInfo />
      <ContextMenu />
      <PointerArrow />
    </div>
  );
}
